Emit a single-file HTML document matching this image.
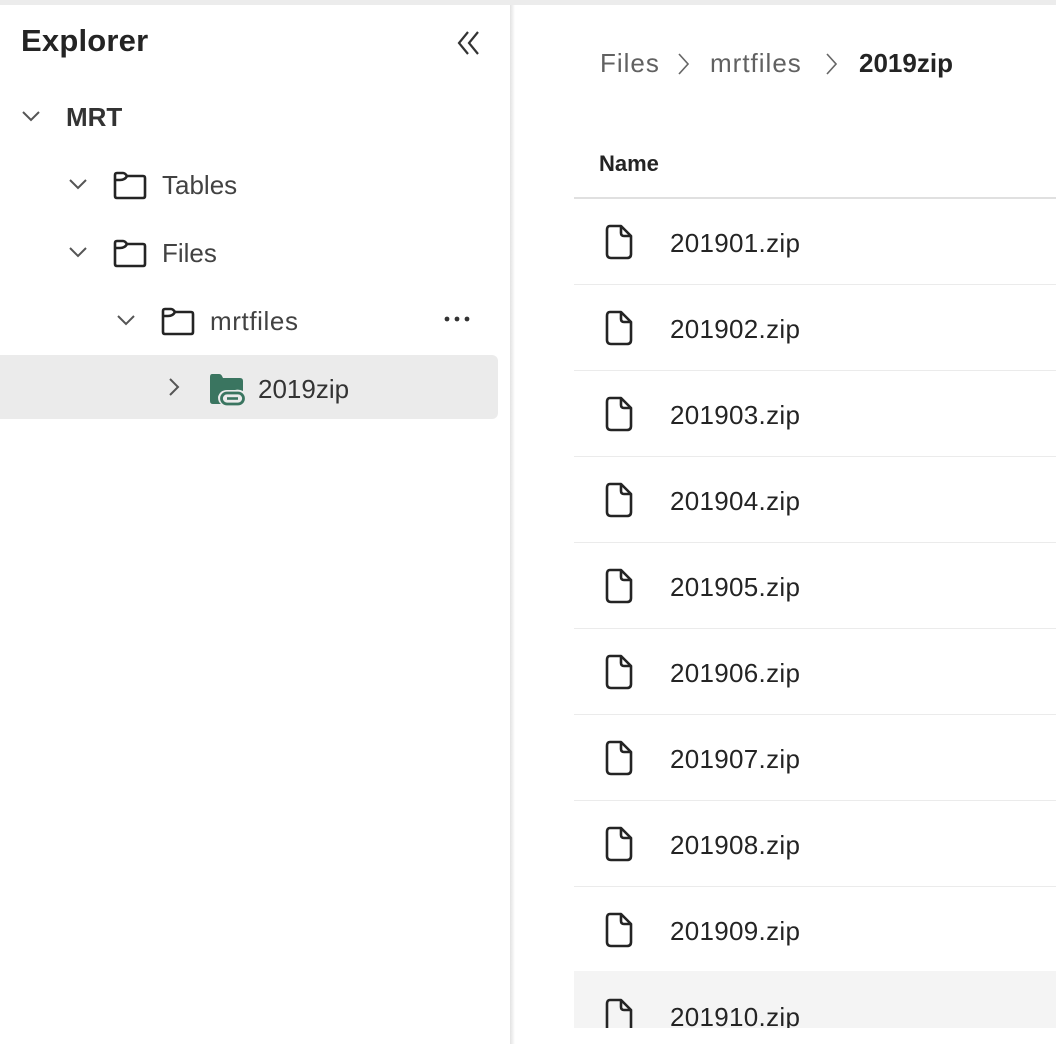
<!DOCTYPE html>
<html><head><meta charset="utf-8"><style>
*{margin:0;padding:0;box-sizing:border-box}
html,body{width:1056px;height:1044px;overflow:hidden;background:#fff;font-family:"Liberation Sans",sans-serif;color:#242424}
.top{position:absolute;left:0;top:0;width:1056px;height:5px;background:#ececec}
.left{position:absolute;left:0;top:5px;width:510px;height:1039px;background:#fff;border-top-left-radius:8px}
.div{position:absolute;left:510px;top:5px;width:5px;height:1039px;background:linear-gradient(to right,#e2e2e2,#fff)}
.t{position:absolute;white-space:nowrap}
svg{position:absolute}
.sep{position:absolute;left:574px;width:482px;height:1px;background:#ebebeb}
.fname{position:absolute;left:670px;font-size:26px;letter-spacing:0.3px;color:#242424}
</style></head><body>
<div class="top"></div>
<div class="left"></div>
<div class="div"></div>

<div class="t" style="left:21px;top:23px;font-size:31px;font-weight:bold;color:#242424;letter-spacing:0.2px">Explorer</div>
<svg style="left:456px;top:29px" width="26" height="28" viewBox="0 0 26 28"><path d="M12 3 L3 14 L12 25 M22 3 L13 14 L22 25" fill="none" stroke="#333" stroke-width="2.2"/></svg>

<svg style="left:22px;top:110px" width="18" height="12" viewBox="0 0 18 12"><path d="M1 2 L9 10 L17 2" fill="none" stroke="#555" stroke-width="2"/></svg>
<div class="t" style="left:66px;top:102px;font-size:26px;font-weight:bold;color:#333">MRT</div>

<svg style="left:69px;top:178px" width="18" height="12" viewBox="0 0 18 12"><path d="M1 2 L9 10 L17 2" fill="none" stroke="#555" stroke-width="2"/></svg>
<svg style="left:113px;top:170px" width="34" height="30" viewBox="0 0 34 30"><path d="M4 3 H10 Q12 3 14 6 H30 Q32 6 32 8 V26 Q32 28 30 28 H4 Q2 28 2 26 V5 Q2 3 4 3 Z M2 10 H7 Q12 10 14 6" fill="none" stroke="#242424" stroke-width="2.6" stroke-linejoin="round"/></svg>
<div class="t" style="left:162px;top:170px;font-size:26px;color:#424242">Tables</div>

<svg style="left:69px;top:246px" width="18" height="12" viewBox="0 0 18 12"><path d="M1 2 L9 10 L17 2" fill="none" stroke="#555" stroke-width="2"/></svg>
<svg style="left:113px;top:238px" width="34" height="30" viewBox="0 0 34 30"><path d="M4 3 H10 Q12 3 14 6 H30 Q32 6 32 8 V26 Q32 28 30 28 H4 Q2 28 2 26 V5 Q2 3 4 3 Z M2 10 H7 Q12 10 14 6" fill="none" stroke="#242424" stroke-width="2.6" stroke-linejoin="round"/></svg>
<div class="t" style="left:162px;top:238px;font-size:26px;color:#424242">Files</div>

<svg style="left:117px;top:314px" width="18" height="12" viewBox="0 0 18 12"><path d="M1 2 L9 10 L17 2" fill="none" stroke="#555" stroke-width="2"/></svg>
<svg style="left:161px;top:306px" width="34" height="30" viewBox="0 0 34 30"><path d="M4 3 H10 Q12 3 14 6 H30 Q32 6 32 8 V26 Q32 28 30 28 H4 Q2 28 2 26 V5 Q2 3 4 3 Z M2 10 H7 Q12 10 14 6" fill="none" stroke="#242424" stroke-width="2.6" stroke-linejoin="round"/></svg>
<div class="t" style="left:210px;top:306px;font-size:26px;color:#424242;letter-spacing:0.6px">mrtfiles</div>
<svg style="left:444px;top:315px" width="28" height="8" viewBox="0 0 28 8"><circle cx="3" cy="4" r="2.4" fill="#333"/><circle cx="13" cy="4" r="2.4" fill="#333"/><circle cx="23" cy="4" r="2.4" fill="#333"/></svg>

<div style="position:absolute;left:0;top:355px;width:498px;height:64px;background:#ebebeb;border-radius:0 6px 6px 0"></div>
<svg style="left:168px;top:378px" width="12" height="18" viewBox="0 0 12 18"><path d="M2 1 L10 9 L2 17" fill="none" stroke="#555" stroke-width="2"/></svg>
<svg style="left:208px;top:372px" width="38" height="34" viewBox="0 0 38 34"><path d="M4 2 H11 Q13 2 14 4 L15 6 H32 Q35 6 35 9 V19 Q31 17 27 18 H19 Q12 18 10 25 Q10 30 13 32 H5 Q2 32 2 29 V5 Q2 2 4 2 Z" fill="#3a7560"/><rect x="13.5" y="21" width="22" height="11" rx="5.5" fill="none" stroke="#3a7560" stroke-width="2.8"/><line x1="19" y1="26.5" x2="30" y2="26.5" stroke="#3a7560" stroke-width="2.6"/></svg>
<div class="t" style="left:258px;top:374px;font-size:26px;color:#333">2019zip</div>

<div class="t" style="left:600px;top:48px;font-size:26px;color:#616161;letter-spacing:1px">Files</div>
<svg style="left:677px;top:53px" width="12" height="22" viewBox="0 0 12 22"><path d="M2 1 L11 11 L2 21" fill="none" stroke="#666" stroke-width="1.6"/></svg>
<div class="t" style="left:710px;top:48px;font-size:26px;color:#616161;letter-spacing:1px">mrtfiles</div>
<svg style="left:825px;top:53px" width="12" height="22" viewBox="0 0 12 22"><path d="M2 1 L11 11 L2 21" fill="none" stroke="#666" stroke-width="1.6"/></svg>
<div class="t" style="left:859px;top:48px;font-size:26px;font-weight:bold;color:#242424">2019zip</div>

<div class="t" style="left:599px;top:151px;font-size:22px;font-weight:bold;color:#242424">Name</div>
<div style="position:absolute;left:574px;top:197px;width:482px;height:2px;background:#e0e0e0"></div>

<div style="position:absolute;left:574px;top:971px;width:482px;height:57px;background:#f4f4f4"></div>

<div class="sep" style="top:284px"></div>
<div class="sep" style="top:370px"></div>
<div class="sep" style="top:456px"></div>
<div class="sep" style="top:542px"></div>
<div class="sep" style="top:628px"></div>
<div class="sep" style="top:714px"></div>
<div class="sep" style="top:800px"></div>
<div class="sep" style="top:886px"></div>

<svg style="left:604px;top:224px" width="30" height="36" viewBox="0 0 30 36"><path d="M6 2 H17 L27 12 V30 Q27 34 23 34 H7 Q3 34 3 30 V6 Q3 2 6 2 Z M17 2 V9 Q17 12 20 12 H27" fill="none" stroke="#242424" stroke-width="2.6" stroke-linejoin="round"/></svg>
<div class="fname" style="top:228px">201901.zip</div>
<svg style="left:604px;top:310px" width="30" height="36" viewBox="0 0 30 36"><path d="M6 2 H17 L27 12 V30 Q27 34 23 34 H7 Q3 34 3 30 V6 Q3 2 6 2 Z M17 2 V9 Q17 12 20 12 H27" fill="none" stroke="#242424" stroke-width="2.6" stroke-linejoin="round"/></svg>
<div class="fname" style="top:314px">201902.zip</div>
<svg style="left:604px;top:396px" width="30" height="36" viewBox="0 0 30 36"><path d="M6 2 H17 L27 12 V30 Q27 34 23 34 H7 Q3 34 3 30 V6 Q3 2 6 2 Z M17 2 V9 Q17 12 20 12 H27" fill="none" stroke="#242424" stroke-width="2.6" stroke-linejoin="round"/></svg>
<div class="fname" style="top:400px">201903.zip</div>
<svg style="left:604px;top:482px" width="30" height="36" viewBox="0 0 30 36"><path d="M6 2 H17 L27 12 V30 Q27 34 23 34 H7 Q3 34 3 30 V6 Q3 2 6 2 Z M17 2 V9 Q17 12 20 12 H27" fill="none" stroke="#242424" stroke-width="2.6" stroke-linejoin="round"/></svg>
<div class="fname" style="top:486px">201904.zip</div>
<svg style="left:604px;top:568px" width="30" height="36" viewBox="0 0 30 36"><path d="M6 2 H17 L27 12 V30 Q27 34 23 34 H7 Q3 34 3 30 V6 Q3 2 6 2 Z M17 2 V9 Q17 12 20 12 H27" fill="none" stroke="#242424" stroke-width="2.6" stroke-linejoin="round"/></svg>
<div class="fname" style="top:572px">201905.zip</div>
<svg style="left:604px;top:654px" width="30" height="36" viewBox="0 0 30 36"><path d="M6 2 H17 L27 12 V30 Q27 34 23 34 H7 Q3 34 3 30 V6 Q3 2 6 2 Z M17 2 V9 Q17 12 20 12 H27" fill="none" stroke="#242424" stroke-width="2.6" stroke-linejoin="round"/></svg>
<div class="fname" style="top:658px">201906.zip</div>
<svg style="left:604px;top:740px" width="30" height="36" viewBox="0 0 30 36"><path d="M6 2 H17 L27 12 V30 Q27 34 23 34 H7 Q3 34 3 30 V6 Q3 2 6 2 Z M17 2 V9 Q17 12 20 12 H27" fill="none" stroke="#242424" stroke-width="2.6" stroke-linejoin="round"/></svg>
<div class="fname" style="top:744px">201907.zip</div>
<svg style="left:604px;top:826px" width="30" height="36" viewBox="0 0 30 36"><path d="M6 2 H17 L27 12 V30 Q27 34 23 34 H7 Q3 34 3 30 V6 Q3 2 6 2 Z M17 2 V9 Q17 12 20 12 H27" fill="none" stroke="#242424" stroke-width="2.6" stroke-linejoin="round"/></svg>
<div class="fname" style="top:830px">201908.zip</div>
<svg style="left:604px;top:912px" width="30" height="36" viewBox="0 0 30 36"><path d="M6 2 H17 L27 12 V30 Q27 34 23 34 H7 Q3 34 3 30 V6 Q3 2 6 2 Z M17 2 V9 Q17 12 20 12 H27" fill="none" stroke="#242424" stroke-width="2.6" stroke-linejoin="round"/></svg>
<div class="fname" style="top:916px">201909.zip</div>

<div style="position:absolute;left:574px;top:971px;width:482px;height:57px;overflow:hidden">
<svg style="left:30px;top:27px" width="30" height="36" viewBox="0 0 30 36"><path d="M6 2 H17 L27 12 V30 Q27 34 23 34 H7 Q3 34 3 30 V6 Q3 2 6 2 Z M17 2 V9 Q17 12 20 12 H27" fill="none" stroke="#242424" stroke-width="2.6" stroke-linejoin="round"/></svg>
<div class="fname" style="left:96px;top:31px">201910.zip</div>
</div>
</body></html>
